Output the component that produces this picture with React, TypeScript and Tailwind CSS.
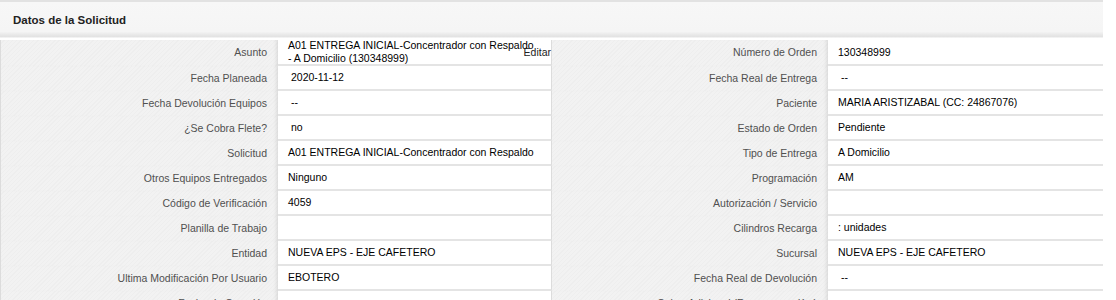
import React from 'react';

type Row = { label: string; value: React.ReactNode; pad?: boolean };

const left: Row[] = [
  {
    label: 'Asunto',
    value: (
      <>
        A01 ENTREGA INICIAL-Concentrador con Respaldo
        <br />- A Domicilio (130348999)
      </>
    ),
  },
  { label: 'Fecha Planeada', value: '2020-11-12', pad: true },
  { label: 'Fecha Devolución Equipos', value: '--', pad: true },
  { label: '¿Se Cobra Flete?', value: 'no', pad: true },
  { label: 'Solicitud', value: 'A01 ENTREGA INICIAL-Concentrador con Respaldo' },
  { label: 'Otros Equipos Entregados', value: 'Ninguno' },
  { label: 'Código de Verificación', value: '4059' },
  { label: 'Planilla de Trabajo', value: '' },
  { label: 'Entidad', value: 'NUEVA EPS - EJE CAFETERO' },
  { label: 'Ultima Modificación Por Usuario', value: 'EBOTERO' },
  { label: 'Fecha de Creación', value: '' },
];

const right: Row[] = [
  { label: 'Número de Orden', value: '130348999' },
  { label: 'Fecha Real de Entrega', value: '--', pad: true },
  { label: 'Paciente', value: 'MARIA ARISTIZABAL (CC: 24867076)' },
  { label: 'Estado de Orden', value: 'Pendiente' },
  { label: 'Tipo de Entrega', value: 'A Domicilio' },
  { label: 'Programación', value: 'AM' },
  { label: 'Autorización / Servicio', value: '' },
  { label: 'Cilindros Recarga', value: ': unidades' },
  { label: 'Sucursal', value: 'NUEVA EPS - EJE CAFETERO' },
  { label: 'Fecha Real de Devolución', value: '--', pad: true },
  { label: 'Cobro Adicional (Recargo por Km)', value: '' },
];

const labelCls =
  'flex items-center justify-end pr-[11px] text-[#505050] whitespace-nowrap shadow-[inset_-4px_0_4px_-3px_rgba(0,0,0,0.12)] bg-[repeating-linear-gradient(135deg,#f2f2f2_0px,#f2f2f2_2px,#eeeeee_2px,#eeeeee_3px)]';

function Label({ text }: { text: string }) {
  return <div className={labelCls}>{text}</div>;
}

function Value({ row, first }: { row: Row; first?: boolean }) {
  return (
    <div
      className={
        'relative flex items-center bg-white border-b-2 border-r border-b-[#e4e4e4] border-r-[#dcdcdc] text-black leading-[13px] whitespace-nowrap ' +
        (row.pad ? 'pl-[13px]' : 'pl-[10px]')
      }
    >
      <span>{row.value}</span>
      {first && <span className="absolute right-0 top-[6px] text-[#222]">Editar</span>}
    </div>
  );
}

export default function App() {
  return (
    <div
      className="w-[1103px] h-[300px] overflow-hidden bg-white text-[10.5px]"
      style={{ fontFamily: '"Liberation Sans", Arial, sans-serif' }}
    >
      <div className="h-[38px] border-t-2 border-[#e2e2e2] bg-[linear-gradient(to_bottom,#f7f7f7_0%,#f5f5f5_82%,#e7e7e7_92%,#e2e2e2_97%,#ffffff_100%)] flex items-center pl-[13px] pt-[1px]">
        <span className="font-bold text-[11.5px] text-[#222]">Datos de la Solicitud</span>
      </div>
      <div className="mt-[2px] grid grid-cols-[277px_274px_276px_276px] grid-rows-[26px] auto-rows-[25px] border-l border-[#dcdcdc]">
        {left.map((r, i) => (
          <React.Fragment key={i}>
            <Label text={r.label} />
            <Value row={r} first={i === 0} />
            <Label text={right[i].label} />
            <Value row={right[i]} />
          </React.Fragment>
        ))}
      </div>
    </div>
  );
}
